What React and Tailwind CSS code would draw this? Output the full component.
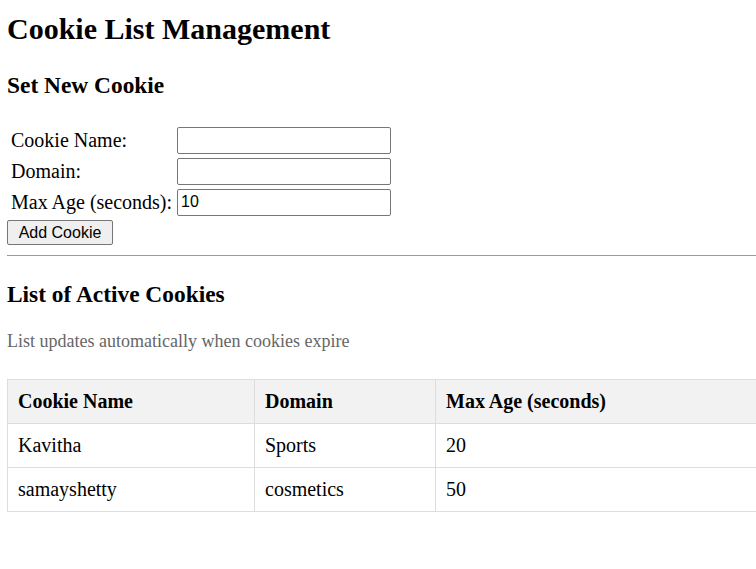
import React from "react";

export default function App() {
  const rows = [
    { name: "Kavitha", domain: "Sports", age: "20" },
    { name: "samayshetty", domain: "cosmetics", age: "50" },
  ];
  return (
    <div className="w-[756px] h-[569px] overflow-hidden bg-white text-black font-['Liberation_Serif','Times_New_Roman',serif]">
      <div className="pl-[7px] pt-[11px]">
        <h1 className="text-[30px] leading-[35px] font-bold">Cookie List Management</h1>
        <h2 className="mt-[26px] text-[23.4px] leading-[27px] font-bold">Set New Cookie</h2>
        <div className="mt-[28px] flex flex-col gap-[4px] pl-[3px]">
          {[
            ["Cookie Name:", ""],
            ["Domain:", ""],
            ["Max Age (seconds):", "10"],
          ].map(([label, val]) => (
            <div key={label} className="flex items-center h-[27px]">
              <span className="w-[167px] text-[20px] leading-[23px] pl-px whitespace-nowrap">{label}</span>
              <input
                readOnly
                value={val}
                style={{ fontSize: "16px" }}
                className="w-[214px] h-[27px] border border-[#767676] rounded-[2px] px-[3px] pb-[1px] text-[16px] leading-[18px] font-['Liberation_Sans',Arial,sans-serif] text-black outline-none"
              />
            </div>
          ))}
        </div>
        <button className="mt-[4px] block w-[106px] h-[25px] bg-[#efefef] border border-[#767676] rounded-[2px] text-[16px] leading-[18px] font-['Liberation_Sans',Arial,sans-serif] text-black">
          Add Cookie
        </button>
        <div className="mt-[10px] w-[760px] border-t border-[#9a9a9a]" />
        <h2 className="mt-[25px] text-[23.4px] leading-[27px] font-bold">List of Active Cookies</h2>
        <p className="mt-[23px] text-[18px] leading-[21px] text-[#666666]">
          List updates automatically when cookies expire
        </p>
        <table className="mt-[27px] w-[800px] border-collapse text-[20px] leading-[23px] text-left">
          <thead>
            <tr className="bg-[#f2f2f2]">
              <th className="w-[247px] border border-[#dddddd] p-[10px] font-bold">Cookie Name</th>
              <th className="w-[181px] border border-[#dddddd] p-[10px] font-bold">Domain</th>
              <th className="border border-[#dddddd] p-[10px] font-bold">Max Age (seconds)</th>
            </tr>
          </thead>
          <tbody>
            {rows.map((r) => (
              <tr key={r.name}>
                <td className="border border-[#dddddd] p-[10px]">{r.name}</td>
                <td className="border border-[#dddddd] p-[10px]">{r.domain}</td>
                <td className="border border-[#dddddd] p-[10px]">{r.age}</td>
              </tr>
            ))}
          </tbody>
        </table>
      </div>
    </div>
  );
}
